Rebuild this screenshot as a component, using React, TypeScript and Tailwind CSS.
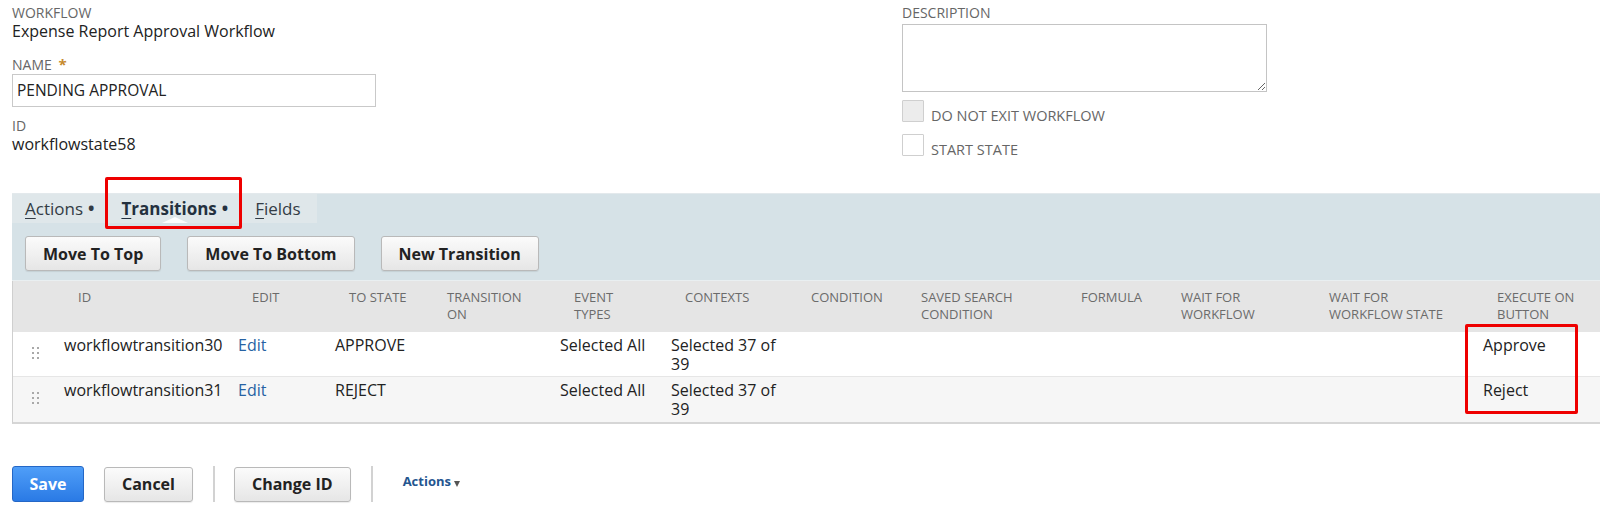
import React from 'react';

const HEADERS: string[][] = [
  [''],
  ['ID'],
  ['EDIT'],
  ['TO STATE'],
  ['TRANSITION', 'ON'],
  ['EVENT', 'TYPES'],
  ['CONTEXTS'],
  ['CONDITION'],
  ['SAVED SEARCH', 'CONDITION'],
  ['FORMULA'],
  ['WAIT FOR', 'WORKFLOW'],
  ['WAIT FOR', 'WORKFLOW STATE'],
  ['EXECUTE ON', 'BUTTON'],
];

interface Transition {
  id: string;
  toState: string;
  eventTypes: string;
  contexts: string;
  button: string;
}

const ROWS: Transition[] = [
  { id: 'workflowtransition30', toState: 'APPROVE', eventTypes: 'Selected All', contexts: 'Selected 37 of 39', button: 'Approve' },
  { id: 'workflowtransition31', toState: 'REJECT', eventTypes: 'Selected All', contexts: 'Selected 37 of 39', button: 'Reject' },
];

const COLS = 'grid-cols-[45px_174px_97px_98px_127px_111px_126px_110px_160px_100px_148px_168px_1fr]';

const GrayButton = ({ label }: { label: string }) => (
  <button className="h-[35px] px-[17px] rounded-[3px] border border-[#b9b9b9] bg-gradient-to-b from-[#fbfbfb] to-[#e6e6e6] text-[16px] font-bold text-[#222] shadow-[0_1px_1px_rgba(0,0,0,0.08)]">
    {label}
  </button>
);

const DragHandle = () => (
  <div className="grid grid-cols-2 gap-x-[3px] gap-y-[3px] w-[7px]">
    {[0, 1, 2, 3, 4, 5].map(i => (
      <span key={i} className="w-[2px] h-[2px] bg-[#a9a9a9]" />
    ))}
  </div>
);

const Tab = ({ first, rest, active, bullet }: { first: string; rest: string; active?: boolean; bullet?: boolean }) => (
  <div className={`relative flex items-center h-full ${active ? 'font-bold text-[#24313f]' : 'text-[#333c45]'}`}>
    <span>
      <span className="underline underline-offset-[3px] decoration-1">{first}</span>
      {rest}
      {bullet && <span className="ml-[5px] font-bold">•</span>}
    </span>
    {active && (
      <>
        <span className="absolute bottom-0 left-1/2 -translate-x-1/2 w-0 h-0 border-l-[13px] border-r-[13px] border-b-[6px] border-l-transparent border-r-transparent border-b-white/90" />
        <span className="absolute -left-[16px] -right-[14px] -top-[17px] -bottom-[6px] border-[3px] border-[#ee0000] rounded-[2px]" />
      </>
    )}
  </div>
);

export default function App() {
  return (
    <div className="w-[1600px] h-[527px] overflow-hidden bg-white font-['Open_Sans',sans-serif] text-[#222]">
      <div className="flex">
        <div className="w-[902px] pl-3 pt-[5px]">
          <div className="text-[14px] leading-[16px] text-[#666]">WORKFLOW</div>
          <div className="text-[16px] leading-[20px]">Expense Report Approval Workflow</div>
          <div className="mt-[15px] text-[14px] leading-[16px] text-[#666]">
            NAME <span className="ml-[3px] text-[15px] text-[#c68a2e] font-bold">*</span>
          </div>
          <div className="mt-[1px] w-[364px] h-[33px] border border-[#c9c9c9] flex items-center pl-[4px] text-[15.5px]">
            PENDING APPROVAL
          </div>
          <div className="mt-[11px] text-[14px] leading-[16px] text-[#666]">ID</div>
          <div className="text-[16px] leading-[20px]">workflowstate58</div>
        </div>
        <div className="w-[365px] pt-[5px]">
          <div className="text-[14px] leading-[16px] text-[#666]">DESCRIPTION</div>
          <textarea className="block mt-[3px] w-[365px] h-[68px] border border-[#c4c4c4] outline-none" defaultValue="" />
          <div className="mt-[8px] flex items-end gap-[7px]">
            <span className="w-[22px] h-[22px] border border-[#cfcfcf] bg-[#ececec] rounded-[1px]" />
            <span className="text-[14.5px] leading-[12px] text-[#666]">DO NOT EXIT WORKFLOW</span>
          </div>
          <div className="mt-[12px] flex items-end gap-[7px]">
            <span className="w-[22px] h-[22px] border border-[#cfcfcf] bg-white rounded-[1px]" />
            <span className="text-[14.5px] leading-[12px] text-[#666]">START STATE</span>
          </div>
        </div>
      </div>

      <div className="mt-[37px] ml-3 bg-[#d6e2e7] border-t border-[#e3e9ec] border-b border-b-[#e9eff1] h-[88px]">
        <div className="flex w-[305px] h-[29px] bg-[#dfe7ea] pl-[13px] gap-[27px] text-[17px] leading-[29px]">
          <Tab first="A" rest="ctions" bullet />
          <Tab first="T" rest="ransitions" bullet active />
          <Tab first="F" rest="ields" />
        </div>
        <div className="flex gap-[26px] pl-[13px] mt-[13px]">
          <GrayButton label="Move To Top" />
          <GrayButton label="Move To Bottom" />
          <GrayButton label="New Transition" />
        </div>
      </div>

      <div className="ml-3 border-l border-[#cfcfcf] border-b-2 border-b-[#d6d6d6]">
        <div className={`grid ${COLS} h-[51px] bg-[#e5e5e5] pt-[8px] text-[13px] leading-[17px] text-[#6b6b6b]`}>
          {HEADERS.map((lines, i) => (
            <div key={i} className="pl-[20px] whitespace-nowrap">
              {lines.map((l, j) => (
                <div key={j}>{l}</div>
              ))}
            </div>
          ))}
        </div>
        <div className="relative">
          {ROWS.map((r, i) => (
            <div
              key={r.id}
              className={`grid ${COLS} h-[45px] text-[16px] leading-[19px] ${i === 0 ? 'bg-white border-b border-[#e6e6e6]' : 'bg-[#f6f6f6]'}`}
            >
              <div className="pl-[19px] pt-[15px]">
                <DragHandle />
              </div>
              <div className="pl-[6px] pt-[4px]">{r.id}</div>
              <div className="pl-[6px] pt-[4px]">
                <a className="text-[#2762a3]">Edit</a>
              </div>
              <div className="pl-[6px] pt-[4px]">{r.toState}</div>
              <div className="pl-[6px] pt-[4px]" />
              <div className="pl-[6px] pt-[4px]">{r.eventTypes}</div>
              <div className="pl-[6px] pt-[4px]">{r.contexts}</div>
              <div />
              <div />
              <div />
              <div />
              <div />
              <div className="pl-[6px] pt-[4px]">{r.button}</div>
            </div>
          ))}
          <span className="absolute left-[1452px] -top-[8px] w-[113px] h-[90px] border-[3px] border-[#ee0000] rounded-[2px]" />
        </div>
      </div>

      <div className="flex items-center mt-[42px] ml-3">
        <button className="h-[36px] w-[72px] rounded-[3px] border border-[#2467c6] bg-gradient-to-b from-[#4f9ef8] to-[#2a7ae5] text-white text-[16px] font-bold">
          Save
        </button>
        <div className="ml-[20px]">
          <GrayButton label="Cancel" />
        </div>
        <span className="ml-[20px] w-[2px] h-[36px] bg-[#d2d2d2]" />
        <div className="ml-[19px]">
          <GrayButton label="Change ID" />
        </div>
        <span className="ml-[20px] w-[2px] h-[36px] bg-[#d2d2d2]" />
        <div className="ml-[30px] flex items-center gap-[3px] text-[13px] font-bold text-[#24558f] -mt-[4px]">
          Actions
          <span className="w-0 h-0 border-l-[3px] border-r-[3px] border-t-[6px] border-l-transparent border-r-transparent border-t-[#555] mt-[3px]" />
        </div>
      </div>
    </div>
  );
}
